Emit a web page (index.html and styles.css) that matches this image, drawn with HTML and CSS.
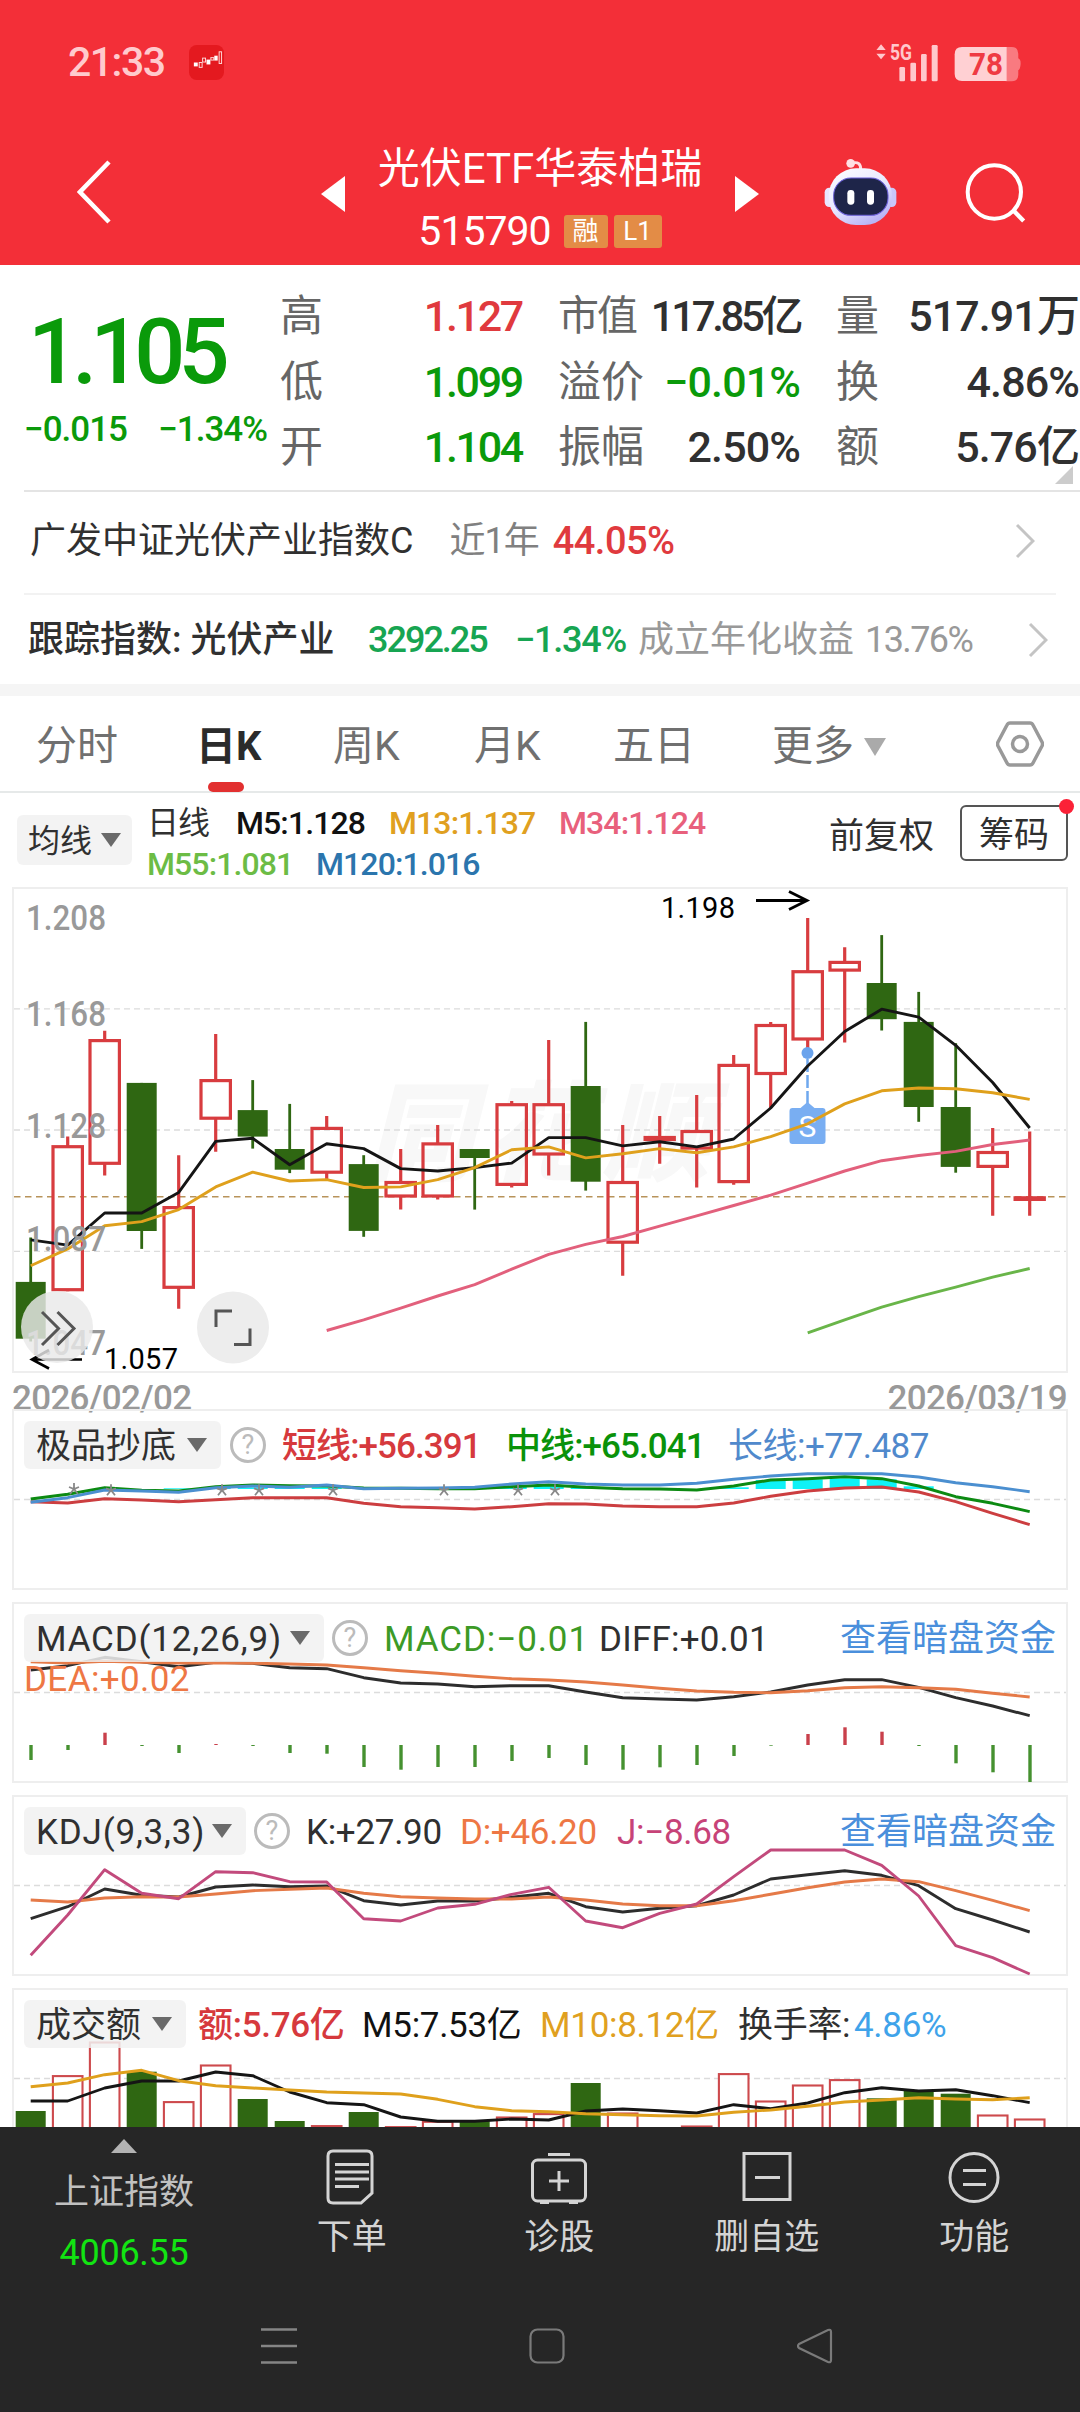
FILE: index.html
```html
<!DOCTYPE html>
<html lang="zh-CN">
<head>
<meta charset="utf-8">
<title>光伏ETF华泰柏瑞 515790</title>
<link rel="stylesheet" href="styles.css">
</head>
<body>
<div class="screen">
  <header class="top">
    <div class="status">
      <span class="clock">21:33</span>
      <svg class="app-badge" viewBox="0 0 36 36"><rect width="36" height="36" rx="8" fill="#e4191f"/><g fill="#fff"><rect x="5" y="18" width="4" height="4"/><rect x="18" y="15" width="4" height="5"/><rect x="26" y="11" width="3.5" height="5"/></g><g fill="none" stroke="#ffd9d9" stroke-width="1"><rect x="10.500" y="18" width="3" height="5"/><rect x="14" y="13.500" width="3" height="4"/><rect x="22.500" y="13" width="3" height="2.500"/><rect x="31" y="7" width="2.500" height="12"/></g></svg>
      <svg class="signal" viewBox="190 30 450 130">
        <g fill="#ffc8cc">
          <path d="M211 40l14 17h-28zM211 85l14-17h-28z"/>
          <rect x="266" y="108" width="17" height="43" rx="4"/><rect x="299" y="95" width="17" height="56" rx="4"/><rect x="331" y="69" width="17" height="82" rx="4"/><rect x="363" y="42" width="18" height="109" rx="4"/>
          <text class="net" x="238" y="86" textLength="66" lengthAdjust="spacingAndGlyphs">5G</text>
        </g>
        <path fill="#f97a80" d="M585 48h18q20 0 20 20v14q8 3 7 18t-7 18v14q0 19-20 19h-18z"/>
        <path fill="#ffd0d3" d="M454 48h134v102H454q-22 0-22-22V70q0-22 22-22z"/>
        <text class="bat" x="475" y="133" textLength="102" lengthAdjust="spacingAndGlyphs">78</text>
      </svg>
    </div>
    <nav class="titlebar">
      <svg class="back" viewBox="0 0 34 64"><path d="M32 2L3 32l29 30" fill="none" stroke="#fff" stroke-width="4.500"/></svg>
      <svg class="prev" viewBox="0 0 24 36"><path d="M24 0v36L0 18z" fill="#fff"/></svg>
      <div class="name">
        <div class="name-main">光伏ETF华泰柏瑞</div>
        <div class="name-code"><span>515790</span><i class="tag">融</i><i class="tag tag-l">L1</i></div>
      </div>
      <svg class="next" viewBox="0 0 24 36"><path d="M0 0v36l24-18z" fill="#fff"/></svg>
      <svg class="robot" viewBox="40 375 230 215">
        <defs><linearGradient id="rb" x1="0" y1="0" x2=".6" y2="1"><stop offset="0" stop-color="#fff"/><stop offset=".6" stop-color="#e6e6ff"/><stop offset="1" stop-color="#b9b5f5"/></linearGradient></defs>
        <path d="M128 396q26-6 25 20" fill="none" stroke="#ffdfe3" stroke-width="9"/><circle cx="123" cy="397" r="13" fill="#ffdfe3"/>
        <rect x="45" y="470" width="30" height="58" rx="14" fill="#e9e6ff"/><rect x="230" y="470" width="30" height="58" rx="14" fill="#c9c7fa"/>
        <rect x="57" y="412" width="190" height="170" rx="82" fill="url(#rb)"/>
        <rect x="72" y="441" width="163" height="112" rx="52" fill="#1e2549" stroke="#6a5fd8" stroke-width="3"/>
        <rect x="113" y="477" width="21" height="44" rx="10" fill="#fff"/><rect x="172" y="477" width="21" height="44" rx="10" fill="#fff"/>
      </svg>
      <svg class="search" viewBox="460 395 195 190"><circle cx="554" cy="488" r="80" fill="none" stroke="#fff" stroke-width="12"/><path d="M609 541l33 34" stroke="#fff" stroke-width="13"/></svg>
    </nav>
  </header>

  <section class="quote">
    <div class="price-box">
      <div class="price">1.105</div>
      <div class="change"><span>−0.015</span><span>−1.34%</span></div>
    </div>
    <div class="stats">
      <div class="stat"><label>高</label><b class="up">1.127</b></div>
      <div class="stat"><label class="tight">市值</label><b class="tight">117.85亿</b></div>
      <div class="stat"><label>量</label><b class="wide">517.91万</b></div>
      <div class="stat"><label>低</label><b class="down">1.099</b></div>
      <div class="stat"><label>溢价</label><b class="down wide">−0.01%</b></div>
      <div class="stat"><label>换</label><b class="wide">4.86%</b></div>
      <div class="stat"><label>开</label><b class="down">1.104</b></div>
      <div class="stat"><label>振幅</label><b class="wide">2.50%</b></div>
      <div class="stat"><label>额</label><b class="wide">5.76亿</b></div>
    </div>
    <i class="corner"></i>
  </section>

  <section class="fund">
    <span>广发中证光伏产业指数C</span><span class="muted">近1年</span><b>44.05%</b>
    <svg class="chev" viewBox="0 0 20 36"><path d="M2 2l16 16L2 34" fill="none" stroke="#c4c4c4" stroke-width="3"/></svg>
  </section>
  <section class="track">
    <span class="track-name">跟踪指数: 光伏产业</span><b class="tv">3292.25</b><b class="tp">−1.34%</b><span class="tl">成立年化收益</span><span class="ty">13.76%</span>
    <svg class="chev" viewBox="0 0 20 36"><path d="M2 2l16 16L2 34" fill="none" stroke="#c4c4c4" stroke-width="3"/></svg>
  </section>

  <nav class="tabs">
    <span>分时</span><span class="on">日K</span><span>周K</span><span>月K</span><span>五日</span><span class="more">更多<i></i></span>
    <svg class="hex" viewBox="0 0 48 46"><path d="M14 2h20q2 0 3 2l9 17q1 2 0 4l-9 17q-1 2-3 2H14q-2 0-3-2L2 25q-1-2 0-4l9-17q1-2 3-2z" fill="none" stroke="#999" stroke-width="3.500"/><circle cx="24" cy="23" r="7.500" fill="none" stroke="#999" stroke-width="3.500"/></svg>
  </nav>

  <section class="ma">
    <div class="pill ma-pill">均线<i class="tri"></i></div>
    <div class="ma-vals">
      <div class="ma-a"><span class="period">日线</span><span class="k">M5:1.128</span><span class="y">M13:1.137</span><span class="p">M34:1.124</span></div>
      <div class="ma-b"><span class="g">M55:1.081</span><span class="b">M120:1.016</span></div>
    </div>
    <div class="adj">前复权</div>
    <div class="chips">筹码<i></i></div>
  </section>

  <section class="panel kline">
    <svg id="kline" class="plot" viewBox="12 7 1056 486"></svg>
  </section>
  <div class="dates"><span>2026/02/02</span><span>2026/03/19</span></div>

  <section class="panel">
    <svg id="jpcd" class="plot" viewBox="12 9 1056 181"></svg>
    <div class="head h1"><div class="pill">极品抄底<i class="tri"></i></div><i class="help">?</i><span class="red">短线:+56.391</span><span class="green">中线:+65.041</span><span class="blue">长线:+77.487</span></div>
  </section>
  <section class="panel">
    <svg id="macd" class="plot" viewBox="12 202 1056 181"></svg>
    <div class="head h2"><div class="pill">MACD(12,26,9)<i class="tri"></i></div><i class="help">?</i><span class="green2">MACD:−0.01</span><span class="diff">DIFF:+0.01</span><a>查看暗盘资金</a></div>
    <div class="dea">DEA:+0.02</div>
  </section>
  <section class="panel">
    <svg id="kdj" class="plot" viewBox="12 15 1056 181"></svg>
    <div class="head h3"><div class="pill">KDJ(9,3,3)<i class="tri"></i></div><i class="help">?</i><span>K:+27.90</span><span class="orange">D:+46.20</span><span class="pink">J:−8.68</span><a>查看暗盘资金</a></div>
  </section>
  <section class="panel vol">
    <svg id="vol" class="plot" viewBox="12 208 1056 139"></svg>
    <div class="head h4"><div class="pill">成交额<i class="tri"></i></div><span class="red">额:5.76亿</span><span class="k">M5:7.53亿</span><span class="y">M10:8.12亿</span><span>换手率:</span><span class="sky">4.86%</span></div>
  </section>

  <footer class="bottom">
    <div class="tools">
      <div class="index"><i></i><span>上证指数</span><b>4006.55</b></div>
      <div class="tool"><svg viewBox="0 0 58 56"><g fill="none" stroke="#d4d4d4" stroke-width="3"><path d="M10 2h34q5 0 5 5v37L38 54H10q-5 0-5-5V7q0-5 5-5z"/><path d="M12 15.500h34M12 23h34M12 30h34M12 37.500h24"/></g></svg><span>下单</span></div>
      <div class="tool"><svg viewBox="0 0 58 56"><g fill="none" stroke="#d4d4d4" stroke-width="3"><rect x="2.500" y="11" width="53" height="41" rx="5"/><path d="M18 5.500h22M10 53.500h9M39 53.500h9M29 22v20M19 32h20"/></g></svg><span>诊股</span></div>
      <div class="tool"><svg viewBox="0 0 58 56"><g fill="none" stroke="#d4d4d4" stroke-width="3"><rect x="6" y="4.500" width="46" height="46"/><path d="M17 28.500h25"/></g></svg><span>删自选</span></div>
      <div class="tool"><svg viewBox="0 0 58 56"><g fill="none" stroke="#d4d4d4" stroke-width="3"><circle cx="29" cy="28.500" r="24"/><path d="M18 21.500h23M18 35.500h23"/></g></svg><span>功能</span></div>
    </div>
    <div class="sysnav">
      <svg viewBox="0 0 36 36"><path d="M0 1.500h36M0 18h36M0 34.500h36" stroke="#858585" stroke-width="2.500"/></svg>
      <svg viewBox="0 0 36 36"><rect x="1.500" y="1.500" width="33" height="33" rx="7" fill="none" stroke="#7a7a7a" stroke-width="2.200"/></svg>
      <svg viewBox="0 0 36 36"><path d="M2 16L31 2q3-1 3 2v28q0 3-3 2L2 20q-2-2 0-4z" fill="none" stroke="#7a7a7a" stroke-width="2.200"/></svg>
    </div>
  </footer>
</div>
<script src="charts.js"></script>
</body>
</html>
```

FILE: styles.css
```css
* { box-sizing: border-box; }
body { margin: 0; background: #fff; }
i { font-style: normal; }
.screen {
  width: 1080px; height: 2412px; overflow: hidden; display: flex; flex-direction: column;
  font-family: Roboto, "Noto Sans CJK SC", sans-serif; color: #303030; white-space: nowrap; line-height: 1;
}
svg { display: block; flex: none; }
b { font-weight: 500; }

/* header */
.top { height: 265px; background: #f32f38; color: #fff; flex: none; }
.status { height: 125px; display: flex; align-items: center; padding: 0 56px 0 68px; }
.clock { font-size: 41px; font-weight: 500; color: #ffcacd; letter-spacing: -1.500px; width: 121px; }
.app-badge { width: 35px; height: 35px; }
.signal { width: 150px; height: 43.300px; margin-left: auto; }
.net { font: 700 64px Roboto, sans-serif; }
.bat { font: 700 92px Roboto, sans-serif; fill: #ef3a43; }
.titlebar { height: 136px; display: flex; align-items: center; padding-left: 77px; }
.back { width: 34px; height: 64px; margin-right: 210px; margin-top: -2px; }
.prev, .next { width: 24px; height: 36px; margin-top: 2px; }
.name { width: 390px; text-align: center; padding-top: 14px; }
.name-main { font-size: 42px; line-height: 62px; }
.name-code { display: flex; height: 62px; align-items: center; justify-content: center; font-size: 41px; }
.name-code span { letter-spacing: -1px; margin-right: 13px; }
.tag { width: 44px; height: 33px; line-height: 32px; font-size: 26px; background: #e38c46; border-radius: 3px; margin-right: 6px; }
.tag-l { width: 48px; margin-right: 0; }
.robot { width: 76.700px; height: 71.700px; margin-left: 64px; margin-top: -2px; }
.search { width: 65px; height: 63.300px; margin-left: 63px; }

/* quote */
.quote { position: relative; height: 227px; flex: none; display: flex; }
.quote::after { content: ""; position: absolute; left: 24px; right: 0; bottom: 0; height: 2px; background: #e4e4e4; }
.price-box { width: 280px; color: #0a9a0a; flex: none; }
.price { font-size: 90px; font-weight: 500; letter-spacing: -7px; padding: 43px 0 0 28px; height: 144px; }
.change { display: flex; justify-content: space-between; padding: 3px 13px 0 24px; font-size: 35px; font-weight: 500; letter-spacing: -1px; }
.stats { width: 800px; display: grid; grid-template-columns: 242px 242px 243px; column-gap: 36px; grid-auto-rows: 65.500px; padding-top: 19px; height: 217px; }
.stat { display: flex; align-items: center; justify-content: space-between; }
.stat label { font-size: 43px; color: #666; }
.stat b { font-size: 43px; letter-spacing: -2.300px; }
.stat label.tight { font-size: 41px; letter-spacing: -2px; }
.stat b.tight { font-size: 42px; letter-spacing: -3.400px; }
.stat b.wide { letter-spacing: -.900px; }
.up { color: #e03a3e; } .down { color: #0a9a0a; }
.corner { position: absolute; right: 7px; bottom: 8px; border-left: 18px solid transparent; border-bottom: 18px solid #ccc; }

.fund { height: 103px; flex: none; margin: 0 24px; display: flex; align-items: center; font-size: 36px; border-bottom: 2px solid #f2f2f2; padding: 0 21px 4px 6px; }
.fund .muted { color: #808080; margin: 0 14px 0 36px; letter-spacing: -1px; }
.fund b { color: #e03a3e; font-size: 38px; letter-spacing: -.500px; }
.chev { width: 20px; height: 36px; margin-left: auto; }
.track { height: 89px; flex: none; display: grid; grid-template-columns: 340px 147px 123px 227px 163px 20px; align-items: center; font-size: 36px; padding-left: 28px; }
.track-name { font-weight: 500; }
.track b { color: #17a552; letter-spacing: -1.200px; }
.track b.tv { letter-spacing: -2px; }
.tl, .ty { color: #999; } .ty { letter-spacing: -1.600px; }

/* tabs */
.tabs { position: relative; height: 109px; flex: none; border-top: 12px solid #f5f5f5; border-bottom: 2px solid #e6e9e9; display: grid; grid-template-columns: 160px 137px 141px 139px 159px 224px 48px; padding-left: 36px; align-items: center; font-size: 41px; color: #707070; }
.tabs span { position: relative; top: 3px; }
.tabs .on { font-weight: 700; color: #2b2b2b; font-size: 40px; }
.on::after { content: ""; position: absolute; left: 12px; bottom: -25px; width: 36px; height: 10px; border-radius: 5px; background: #e23030; }
.more { display: flex; align-items: center; gap: 10px; }
.more i { border: 11px solid transparent; border-top: 18px solid #aaa; border-bottom: 0; }
.hex { width: 48px; height: 46px; }

/* moving averages */
.ma { height: 94px; flex: none; display: flex; position: relative; padding-left: 17px; }
.pill { background: #f1f1f1d9; border-radius: 6px; height: 48px; display: flex; align-items: center; justify-content: space-between; padding: 2px 14px 0 12px; font-size: 35px; color: #303030; }
.tri { border: 10px solid transparent; border-top: 14px solid #6a6a6a; border-bottom: 0; margin-top: -2px; }
.ma-pill { width: 115px; height: 50px; margin-top: 22px; font-size: 32px; padding: 2px 11px 0; }
.ma-vals { width: 682px; padding: 9px 0 0 15px; font-size: 32px; font-weight: 500; letter-spacing: -.900px; }
.ma-vals .period { font-weight: 400; }
.ma-a { display: grid; grid-template-columns: 89px 153px 170px 160px; height: 41px; align-items: center; }
.ma-b { display: grid; grid-template-columns: 169px 170px; height: 41px; align-items: center; }
.k { color: #111; } .y { color: #e0a020; } .p { color: #e8607c; } .g { color: #6cbc45; } .b { color: #2b75ad; }
.adj { width: 146px; padding: 26px 0 0 15px; font-size: 35px; }
.chips { position: relative; width: 108px; height: 56px; margin-top: 12px; border: 2px solid #555; border-radius: 6px; font-size: 35px; line-height: 57px; text-align: center; }
.chips i { position: absolute; right: -8px; top: -8px; width: 15px; height: 15px; border-radius: 50%; background: #fb2137; }

/* charts */
.panel { position: relative; width: 1056px; height: 181px; margin: 0 0 12px 12px; flex: none; box-shadow: inset 0 0 0 2px #eee; }
.kline { height: 486px; margin-bottom: 0; }
.vol { height: 139px; margin-bottom: 0; box-shadow: inset 0 2px #eee, inset 2px 0 #eee, inset -2px 0 #eee; }
.plot { position: absolute; left: 0; top: 0; width: 100%; height: 100%; }
.plot text { font-family: Roboto, "Noto Sans CJK SC", sans-serif; }
.dates { height: 36px; flex: none; display: flex; justify-content: space-between; padding: 7px 13px 0 12px; font-size: 35px; color: #999; font-weight: 500; letter-spacing: -.700px; line-height: 37px; }
.head { position: relative; padding: 12px 0 0 12px; height: 60px; display: grid; align-items: center; font-size: 35px; }
.help { width: 36px; height: 36px; border: 3px solid #bbb; border-radius: 50%; font-size: 27px; line-height: 31px; text-align: center; color: #bbb; }
.h1 { grid-template-columns: 197px 9px 52px 224px 222px 200px; }
.h2 { grid-template-columns: 300px 8px 52px 215px 241px 220px; }
.h3 { grid-template-columns: 222px 8px 52px 154px 157px 223px 220px; }
.h4 { grid-template-columns: 162px 12px 164px 178px 198px 116px 100px; }
.h2 .pill, .h3 .pill { letter-spacing: .800px; }
.pill { grid-column: 1; }
.help { grid-column: 3; }
.h4 .red { grid-column: 3; }
.head a { color: #4a8fdc; font-size: 36px; padding-top: 2px; }
.head span { letter-spacing: -.300px; padding-top: 2px; }
.h1 span.red, .h1 span.green { letter-spacing: -.900px; }
.h1 span { letter-spacing: -.500px; }
.head .green2 { letter-spacing: .900px; }
.head .diff { letter-spacing: .200px; }
.red { color: #d6393d; } .green { color: #0a920a; } .blue { color: #5089cc; } .green2 { color: #3c9a26; }
.red, .green { font-weight: 500; }
.orange { color: #ee7744; } .pink { color: #c74378; } .sky { color: #3fa3ea; }
.dea { position: relative; padding-left: 12px; font-size: 35px; color: #ee7744; line-height: 36px; letter-spacing: .400px; }

/* footer */
.bottom { flex: 1; background: #262626; color: #d4d4d4; }
.tools { display: flex; height: 163px; padding-left: 20px; }
.index { width: 208px; display: flex; flex-direction: column; align-items: center; color: #c0c0c0; font-size: 35px; padding-top: 12px; margin-right: 20px; }
.index i { border: 13px solid transparent; border-bottom: 14px solid #b3b3b3; border-top: 0; }
.index span { margin-top: 22px; }
.index b { margin-top: 25px; color: #12e412; font-size: 36px; font-weight: 400; letter-spacing: -.300px; }
.tool { width: 207.500px; display: flex; flex-direction: column; align-items: center; font-size: 35px; padding-top: 22px; gap: 15px; }
.tool svg { width: 58px; height: 56px; }
.sysnav { display: flex; gap: 232px; padding: 38px 0 0 261px; }
.sysnav svg { width: 36px; height: 36px; }
```

FILE: charts.js
```js
const cx = i => 30.7 + 37 * i;
const f = n => n.toFixed(1);

// Polyline through one value per trading day, starting at day `from`.
function line(vals, color, k, from = 0, w = 2.9) {
  const pts = vals.map((v, i) => f(cx(i + from)) + ',' + f(v * k)).join(' ');
  return `<polyline points="${pts}" fill="none" stroke="${color}" stroke-width="${w}" stroke-linejoin="round"/>`;
}
const grid = y => `<path d="M14 ${y}H1066" stroke="#dcdcdc" stroke-width="1.3" stroke-dasharray="6 4"/>`;
const RED = '#d83c3f', GREEN = '#2f6712';

// Candlesticks: direction, high, body top, body bottom, low
const candles = [
  ['g',1038,1167,1332,1340],['r',745,770,1194,1194],['r',438,462,827,858],['g',589,589,1019,1071],
  ['r',799,947,1187,1245],['r',447,578,696,789],['g',581,668,745,780],['g',650,781,841,851],
  ['r',685,717,853,868],['g',799,825,1019,1036],['r',781,874,922,957],['r',711,762,922,928],
  ['g',781,781,807,957],['r',642,648,888,893],['r',465,648,800,858],['g',412,598,876,902],
  ['r',711,874,1056,1149],['r',685,743,758,824],['r',624,726,783,893],['r',508,534,880,885],
  ['r',412,418,566,662],['r',110,262,466,498],['r',195,235,266,472],['g',160,299,404,437],
  ['g',325,412,659,702],['g',474,659,833,850],['r',720,787,836,975],['r',730,918,932,975]
];
const K = 0.3444;
const label = (t, x, v, len) => `<text x="${x}" y="${f(v * K)}" font-size="35" font-weight="500" fill="#999" textLength="${len}" lengthAdjust="spacingAndGlyphs">${t}</text>`;

let s = '<text x="366" y="292" font-size="108" font-weight="900" font-style="italic" fill="#f8f8f8" textLength="345">同花顺</text>';
s += [374, 726, 1078].map(v => grid(f(v * K))).join('');
s += `<path d="M14 ${f(920 * K)}H1066" stroke="#b8935a" stroke-width="1.6" stroke-dasharray="6.500 4.500"/>`;
candles.forEach(([c, h, t, b, l], i) => {
  const x = cx(i), T = t * K, B = b * K;
  if (c === 'g') {
    s += `<path d="M${f(x)} ${f(h * K)}V${f(l * K)}" stroke="${GREEN}" stroke-width="2.8"/><rect x="${f(x - 15)}" y="${f(T)}" width="30" height="${f(B - T)}" fill="${GREEN}"/>`;
  } else {
    s += `<path d="M${f(x)} ${f(h * K)}V${f(T + 1)}M${f(x)} ${f(B - 1)}V${f(l * K)}" stroke="${RED}" stroke-width="3.2"/>`;
    s += B - T < 6
      ? `<rect x="${f(x - 16.2)}" y="${f(T)}" width="32.4" height="${f(B - T)}" fill="${RED}"/>`
      : `<rect x="${f(x - 14.7)}" y="${f(T + 1.5)}" width="29.4" height="${f(B - T - 3)}" fill="none" stroke="${RED}" stroke-width="3.2"/>`;
  }
});
s += '<circle cx="807.500" cy="173" r="6" fill="#6aa3ec"/><path d="M807.500 179V225" stroke="#6fa8ee" stroke-width="2.500" stroke-dasharray="13 3"/>';
s += '<path d="M807.500 222l7 6h8q3 0 3 3v30q0 3-3 3h-30q-3 0-3-3v-30q0-3 3-3h8z" fill="#79aef2"/><text x="807.500" y="257" font-size="30" text-anchor="middle" fill="#fff">S</text>';
s += line([1045,1060,967,967,907,759,750,827,766,780,838,845,835,822,748,748,772,760,775,752,662,540,440,375,398,480,588,720], '#151515', K);
s += line([1120,1071,1004,992,957,891,848,874,870,893,891,870,835,783,775,807,795,780,792,775,745,708,650,612,604,606,618,637], '#dfa01c', K);
s += line([1308,1277,1243,1208,1175,1130,1087,1058,1035,1005,975,945,915,880,845,815,800,788,768,755], '#e2607c', K, 8);
s += line([1315,1277,1240,1210,1182,1153,1128], '#69b549', K, 21);
s += label('1.208', 26, 145, 80) + label('1.168', 26, 423, 80) + label('1.128', 26, 748, 80) + label('1.087', 26, 1076, 80) + label('1.047', 26, 1378, 80);
s += '<path d="M82 479.500H32M49 470L32 479.500l17 9" fill="none" stroke="#000" stroke-width="2.600"/>';
s += '<circle cx="57" cy="447" r="36" fill="#e9e9e9" opacity=".82"/><circle cx="233" cy="447.500" r="36" fill="#ededed"/>';
s += '<path d="M42 432l16.500 16.500L42 465M57.500 432L74 448.500 57.500 465M216 447v-16h16M234 464.500h16v-16" fill="none" stroke="#555" stroke-width="3"/>';
s += '<text x="104" y="488.500" font-size="29" fill="#000" textLength="74">1.057</text>';
s += '<text x="661" y="37.500" font-size="29" fill="#000" textLength="74">1.198</text><path d="M756 20.500h50M789 11.500l18 9-18 9" fill="none" stroke="#000" stroke-width="2.800"/>';
document.getElementById('kline').innerHTML = s;

// Short / mid / long term indicator
const T3 = 1 / 3;
s = grid(99.5);
[[4,265],[5,262],[6,262],[7,262],[8,262],[13,257],[14,256],[15,263],[19,262],[20,240],[21,238],[22,235],[23,238],[24,259]].forEach(([i, t]) => {
  s += `<rect x="${f(cx(i) - 15)}" y="${f(t * T3)}" width="30" height="${f((267 - t) * T3)}" fill="#0ff2f7"/>`;
});
s += line([305,309,296,300,305,299,293,293,293,310,320,323,327,320,311,312,318,320,320,309,289,273,264,261,276,305,340,374], '#cc3e40', T3);
s += line([297,283,263,271,273,260,255,257,258,264,265,266,266,260,255,262,266,267,270,258,240,236,230,236,258,290,310,335], '#0c8a12', T3);
s += line([307,293,270,273,277,263,258,262,255,266,265,264,262,252,245,252,255,255,250,238,228,221,221,221,231,248,260,275], '#4b8fd0', T3);
[[74,267],[111,271],[222,271],[259,271],[333,271],[444,271],[518,271],[555,271]].forEach(([x, v]) => {
  const y = v * T3;
  s += `<path d="M${x} ${f(y - 6)}V${f(y)}M${x - 5} ${f(y - 2)}L${x} ${f(y)}L${x + 5} ${f(y - 2)}M${x - 4} ${f(y + 5)}L${x} ${f(y)}L${x + 4} ${f(y + 5)}" fill="none" stroke="#888" stroke-width="1.8"/>`;
});
document.getElementById('jpcd').innerHTML = s;

// MACD
s = grid(292.5);
s += line([810,797,772,785,800,787,790,803,806,833,849,852,860,857,857,876,893,897,900,890,876,855,839,839,862,893,918,947], '#2d2d2d', T3);
s += line([785,789,784,787,789,788,790,792,795,803,812,820,829,836,840,846,855,865,873,877,878,872,863,860,863,868,880,891], '#e57a48', T3);
[1080,1050,998,1038,1059,1032,1038,1059,1061,1101,1109,1101,1101,1083,1074,1095,1109,1102,1095,1068,1037,1002,982,995,1038,1090,1117,1146].forEach((v, i) => {
  s += `<path d="M${f(cx(i) + .3)} 345V${f(v * T3)}" stroke="${v < 1035 ? '#c9404b' : '#459130'}" stroke-width="3.4"/>`;
});
document.getElementById('macd').innerHTML = s;

// KDJ
s = grid(105.5);
s += line([416,380,327,346,351,321,315,320,318,362,375,363,363,352,340,380,396,385,377,345,297,284,272,286,317,386,420,456], '#2d2d2d', T3);
s += line([360,366,354,350,351,342,332,328,324,340,350,354,357,357,351,360,372,377,377,362,343,323,306,297,305,332,361,392], '#e57a48', T3);
s += line([526,405,269,340,356,275,278,305,306,416,423,384,373,343,322,423,443,400,372,290,210,210,210,256,348,497,533,582], '#c24a7c', T3);
document.getElementById('kdj').innerHTML = s;

// Turnover
s = grid(298.5);
const tops = [993,886,785,875,964,854,957,1023,1036,996,1039,1023,1020,1010,1000,909,998,1045,1037,880,962,914,898,955,931,941,1004,1016];
tops.forEach((v, i) => {
  const x = cx(i), y = v * T3;
  s += candles[i][0] === 'g'
    ? `<rect x="${f(x - 15)}" y="${f(y)}" width="30" height="${f(360 - y)}" fill="${GREEN}"/>`
    : `<rect x="${f(x - 14.8)}" y="${f(y + .8)}" width="29.6" height="${f(360 - y)}" fill="#fff" stroke="#cd4a4d" stroke-width="2.1"/>`;
});
s += line([963,963,924,903,903,876,887,936,968,974,1011,1024,1024,1017,1020,993,987,992,999,974,986,969,938,923,933,929,947,968], '#151515', T3);
s += line([920,909,884,871,902,917,924,930,936,939,942,958,980,992,995,1001,1004,1007,1008,997,990,979,966,960,953,957,959,953], '#dfa01c', T3);
document.getElementById('vol').innerHTML = s;
```
